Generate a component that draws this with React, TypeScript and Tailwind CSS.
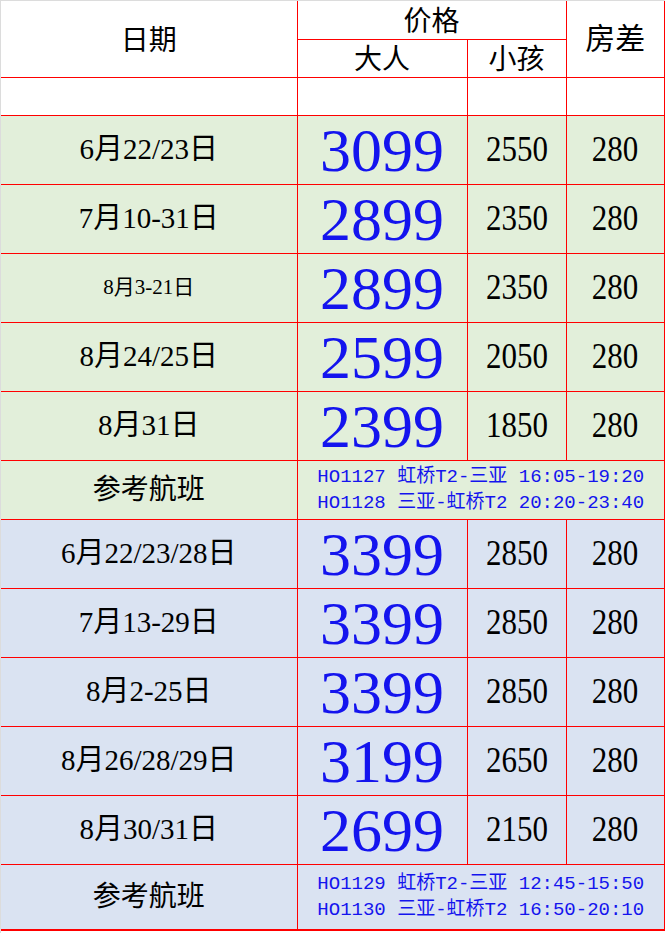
import React from "react";

type Row = { date: string; small?: boolean; adult: string; child: string; room: string };

const greenRows: Row[] = [
  { date: "6月22/23日", adult: "3099", child: "2550", room: "280" },
  { date: "7月10-31日", adult: "2899", child: "2350", room: "280" },
  { date: "8月3-21日", small: true, adult: "2899", child: "2350", room: "280" },
  { date: "8月24/25日", adult: "2599", child: "2050", room: "280" },
  { date: "8月31日", adult: "2399", child: "1850", room: "280" },
];

const blueRows: Row[] = [
  { date: "6月22/23/28日", adult: "3399", child: "2850", room: "280" },
  { date: "7月13-29日", adult: "3399", child: "2850", room: "280" },
  { date: "8月2-25日", adult: "3399", child: "2850", room: "280" },
  { date: "8月26/28/29日", adult: "3199", child: "2650", room: "280" },
  { date: "8月30/31日", adult: "2699", child: "2150", room: "280" },
];

const serif = "font-['Liberation_Serif','Noto_Sans_CJK_SC',serif]";
const mono = "font-['Liberation_Mono','Noto_Sans_CJK_SC',monospace]";
const cell = "border border-[#ff0000] p-0 text-center align-middle";

// narrow, tall digits like the spreadsheet font
const Num = ({ children }: { children: string }) => (
  <span className="inline-block text-[36px] leading-none scale-x-[0.86]">{children}</span>
);

const PriceRows = ({ rows, bg }: { rows: Row[]; bg: string }) => (
  <>
    {rows.map((r, i) => (
      <tr key={i} className={`h-[69px] ${bg}`}>
        <td className={`${cell} border-l-0 ${r.small ? "text-[21px]" : "text-[29px]"} text-black`}>{r.date}</td>
        <td className={`${cell} text-[62px] leading-none text-[#1414ee]`}>{r.adult}</td>
        <td className={`${cell} text-black`}>
          <Num>{r.child}</Num>
        </td>
        <td className={`${cell} text-black`}>
          <Num>{r.room}</Num>
        </td>
      </tr>
    ))}
  </>
);

const FlightRow = ({ lines, bg, h }: { lines: string[]; bg: string; h: string }) => (
  <tr className={`${h} ${bg}`}>
    <td className={`${cell} border-l-0 text-[28px] text-black`}>参考航班</td>
    <td colSpan={3} className={`${cell} ${mono} text-[19px] leading-[26px] text-[#1414ee]`}>
      {lines.map((l, i) => (
        <div key={i} className="whitespace-pre">{l}</div>
      ))}
    </td>
  </tr>
);

export default function App() {
  return (
    <div className={`w-[665px] h-[933px] bg-white border-l border-t border-[#dcdcdc] ${serif}`}>
      <table className="w-[664px] table-fixed border-collapse border-r-2 border-b-2 border-[#ff0000]">
        <colgroup>
          <col className="w-[296px]" />
          <col className="w-[170px]" />
          <col className="w-[99px]" />
          <col className="w-[99px]" />
        </colgroup>
        <tbody>
          <tr className="h-[38px]">
            <td rowSpan={2} className={`${cell} border-t-0 border-l-0 text-[28px] pt-1`}>日期</td>
            <td colSpan={2} className={`${cell} border-t-0 text-[28px] leading-none pt-1`}>价格</td>
            <td rowSpan={2} className={`${cell} border-t-0 text-[30px]`}>房差</td>
          </tr>
          <tr className="h-[38px]">
            <td className={`${cell} text-[28px] leading-none pt-1`}>大人</td>
            <td className={`${cell} text-[28px] leading-none pt-1`}>小孩</td>
          </tr>
          <tr className="h-[38px]">
            <td className={`${cell} border-l-0`}></td>
            <td className={cell}></td>
            <td className={cell}></td>
            <td className={cell}></td>
          </tr>
          <PriceRows rows={greenRows} bg="bg-[#e2efda]" />
          <FlightRow
            bg="bg-[#e2efda]"
            h="h-[59px]"
            lines={["HO1127 虹桥T2-三亚 16:05-19:20", "HO1128 三亚-虹桥T2 20:20-23:40"]}
          />
          <PriceRows rows={blueRows} bg="bg-[#dae3f2]" />
          <FlightRow
            bg="bg-[#dae3f2]"
            h="h-[66px]"
            lines={["HO1129 虹桥T2-三亚 12:45-15:50", "HO1130 三亚-虹桥T2 16:50-20:10"]}
          />
        </tbody>
      </table>
    </div>
  );
}
